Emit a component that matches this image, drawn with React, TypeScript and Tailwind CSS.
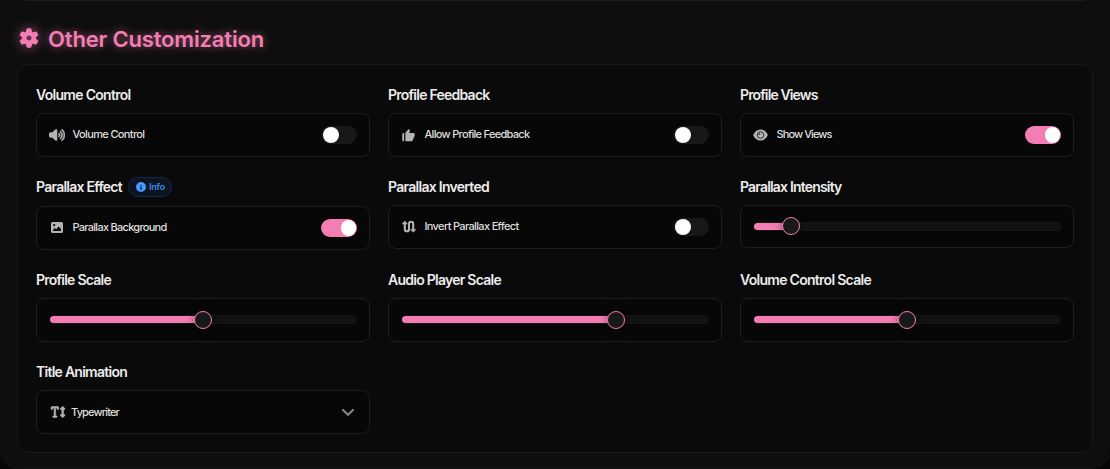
import React, { useLayoutEffect, useRef, useState } from "react";
import { FaVolumeHigh, FaCircleInfo, FaTextHeight } from "react-icons/fa6";
import { BiSolidLike } from "react-icons/bi";

/* Single-line text whose tracking is adjusted so that it spans the given width. */
function Label({ text, width, className }: { text: string; width: number; className: string }) {
  const ref = useRef<HTMLSpanElement>(null);
  const [tracking, setTracking] = useState(0);
  useLayoutEffect(() => {
    const natural = ref.current!.getBoundingClientRect().width;
    setTracking((width - natural) / text.length);
  }, []);
  return (
    <span ref={ref} className={"inline-block shrink-0 whitespace-nowrap " + className} style={{ letterSpacing: tracking }}>
      {text}
    </span>
  );
}

function Cell({ title, width, badge, children }: { title: string; width: number; badge?: boolean; children: React.ReactNode }) {
  return (
    <div>
      <div className={badge ? "mb-[9px] flex h-[21px] items-center gap-1.5" : "mb-[9px] flex h-5 items-center pt-0.5"}>
        <Label text={title} width={width} className="text-[14px] leading-5 font-semibold text-[#ececec]" />
        {badge && (
          <span className="flex h-5 w-11 items-center gap-[3px] rounded-full border border-[#12284a] bg-[#0b1420] pl-[7px] text-[#4b9bff]">
            <FaCircleInfo size={10} />
            <Label text="Info" width={16} className="text-[9px] leading-none font-semibold text-[#3f8ae6]" />
          </span>
        )}
      </div>
      {children}
    </div>
  );
}

const card = "flex h-11 items-center rounded-lg border border-[#1f1f1f] bg-[#070707] px-3";

function Toggle({ icon, text, width, on }: { icon: React.ReactNode; text: string; width: number; on?: boolean }) {
  return (
    <div className={card}>
      <span className="flex w-[23.5px] shrink-0 items-center text-[#b3b3b3]">{icon}</span>
      <Label text={text} width={width} className="pb-0.5 text-[11px] leading-4 font-medium text-[#dedede]" />
      <span className={on ? "ml-auto flex h-[18px] w-9 items-start justify-end rounded-full bg-[#f47eb4] pt-px pr-px" : "ml-auto flex h-[18px] w-9 items-start rounded-full bg-[#181818] pt-px pl-0.5"}>
        <span className="size-[15.5px] rounded-full bg-white" />
      </span>
    </div>
  );
}

function Slider({ value, short }: { value: number; short?: boolean }) {
  return (
    <div className={short ? "flex h-[43px] items-center rounded-lg border border-[#1f1f1f] bg-[#070707] px-3 pb-px" : "flex h-11 items-center rounded-lg border border-[#1f1f1f] bg-[#070707] px-3 pb-px"}>
      <div className="relative ml-px flex h-[9px] w-full items-center rounded-full border border-[#171717] bg-[#121212]">
        <div className="-ml-px h-[7px] rounded-full bg-[#f47eb4]" style={{ width: value }} />
        <span className="absolute top-1/2 size-[18px] -translate-x-1/2 -translate-y-1/2 rounded-full border border-[#f47eb4] bg-[#191919] shadow-[0_0_8px_rgba(0,0,0,0.5)]" style={{ left: value }} />
      </div>
    </div>
  );
}

const GearIcon = () => (
  <svg width="20" height="20" viewBox="-10 -10 20 20" className="ml-[1.5px] mr-[10.5px] overflow-visible drop-shadow-[0_0_6px_rgba(244,126,180,0.6)]">
    <circle r="4.6" fill="none" stroke="currentColor" strokeWidth="4.2" />
    {[0, 60, 120, 180, 240, 300].map((a) => (
      <path key={a} d="M-2.5-6-1.6-9H1.6L2.5-6Z" fill="currentColor" stroke="currentColor" strokeWidth="1.3" strokeLinejoin="round" transform={`rotate(${a})`} />
    ))}
  </svg>
);

const EyeIcon = () => (
  <svg width="15" height="12" viewBox="0 0 15 12">
    <path fill="currentColor" d="M.2 6C1.5 2.7 4.2.4 7.5.4S13.5 2.7 14.8 6c-1.3 3.3-4 5.6-7.3 5.6S1.5 9.3.2 6Z" />
    <circle cx="7.5" cy="6" r="3.3" fill="none" stroke="#333" strokeWidth="1" />
    <path fill="#222" d="M5.5 5.8c1.2.3 2.1-.6 1.8-1.8L5.8 4.4Z" />
  </svg>
);

const ImageIcon = () => (
  <svg width="14" height="14" viewBox="0 0 14 14" className="ml-px">
    <path fill="currentColor" fillRule="evenodd" d="M2.5 1h9q1.5 0 1.5 1.5v8q0 1.5-1.5 1.5h-9Q1 12 1 10.5v-8Q1 1 2.5 1ZM3 10h8V8L8.7 5.5 6.2 8.3 4.8 7 3 9ZM4.2 3a1.1 1.1 0 1 0 0 2.2 1.1 1.1 0 0 0 0-2.2Z" />
  </svg>
);

const InvertIcon = () => (
  <svg width="16" height="14" viewBox="0 0 16 14" fill="none" stroke="currentColor" strokeWidth="2.1">
    <path d="M3.8 2v7.2a2.1 2.1 0 0 0 4.2 0V3.8a2.1 2.1 0 0 1 4.2 0V10" />
    <path d="M.6 4.2 3.8.8 7 4.2ZM9 9.2h6.4L12.2 12.6Z" fill="currentColor" stroke="none" />
  </svg>
);

export default function App() {
  return (
    <div className="h-[469px] w-[1110px] overflow-hidden bg-[#070707] font-['Inter',sans-serif]">
      <div className="flex h-[469px] flex-col rounded-b-[20px] border-b border-[#151515] bg-[#0e0e0e] px-[17px]">
        <div className="mx-2 h-px shrink-0 bg-[#1b1b1b]" />
        <header className="flex h-[63px] shrink-0 items-center pt-[11px] text-[#f47eb4]">
          <GearIcon />
          <h1 className="-ml-px flex pt-px [text-shadow:0_0_9px_rgba(244,126,180,0.6)]">
            <Label text="Other Customization" width={216} className="text-[22px] leading-7 font-semibold" />
          </h1>
        </header>
        <main className="grid h-[389px] shrink-0 grid-cols-3 grid-rows-[73px_74px_73px_73px] gap-x-[18px] gap-y-[19px] rounded-xl border border-[#191919] bg-[#0a0a0a] px-[18px] pt-[19px]">
          <Cell title="Volume Control" width={94.5}>
            <Toggle icon={<FaVolumeHigh size={16} stroke="currentColor" strokeWidth={22} />} text="Volume Control" width={72} />
          </Cell>
          <Cell title="Profile Feedback" width={101.5}>
            <Toggle icon={<BiSolidLike size={15} />} text="Allow Profile Feedback" width={105} />
          </Cell>
          <Cell title="Profile Views" width={77.5}>
            <Toggle icon={<EyeIcon />} text="Show Views" width={55} on />
          </Cell>
          <Cell title="Parallax Effect" width={86} badge>
            <Toggle icon={<ImageIcon />} text="Parallax Background" width={94} on />
          </Cell>
          <Cell title="Parallax Inverted" width={101}>
            <Toggle icon={<InvertIcon />} text="Invert Parallax Effect" width={94} />
          </Cell>
          <Cell title="Parallax Intensity" width={101.5}>
            <Slider value={36} short />
          </Cell>
          <Cell title="Profile Scale" width={75}>
            <Slider value={152} />
          </Cell>
          <Cell title="Audio Player Scale" width={113}>
            <Slider value={213} />
          </Cell>
          <Cell title="Volume Control Scale" width={131}>
            <Slider value={152} />
          </Cell>
          <Cell title="Title Animation" width={91}>
            <div className={card}>
              <span className="flex w-[22px] shrink-0 pl-[2px] text-[#b3b3b3]">
                <FaTextHeight size={14} stroke="currentColor" strokeWidth={26} className="overflow-visible" />
              </span>
              <Label text="Typewriter" width={48} className="pb-px text-[11px] leading-4 font-medium text-[#dedede]" />
              <svg width="14" height="9" viewBox="0 0 14 9" className="ml-auto mr-[2px] text-[#858585]" fill="none" stroke="currentColor" strokeWidth="2.2" strokeLinecap="round">
                <path d="m2 2 5 4.7L12 2" />
              </svg>
            </div>
          </Cell>
        </main>
      </div>
    </div>
  );
}
